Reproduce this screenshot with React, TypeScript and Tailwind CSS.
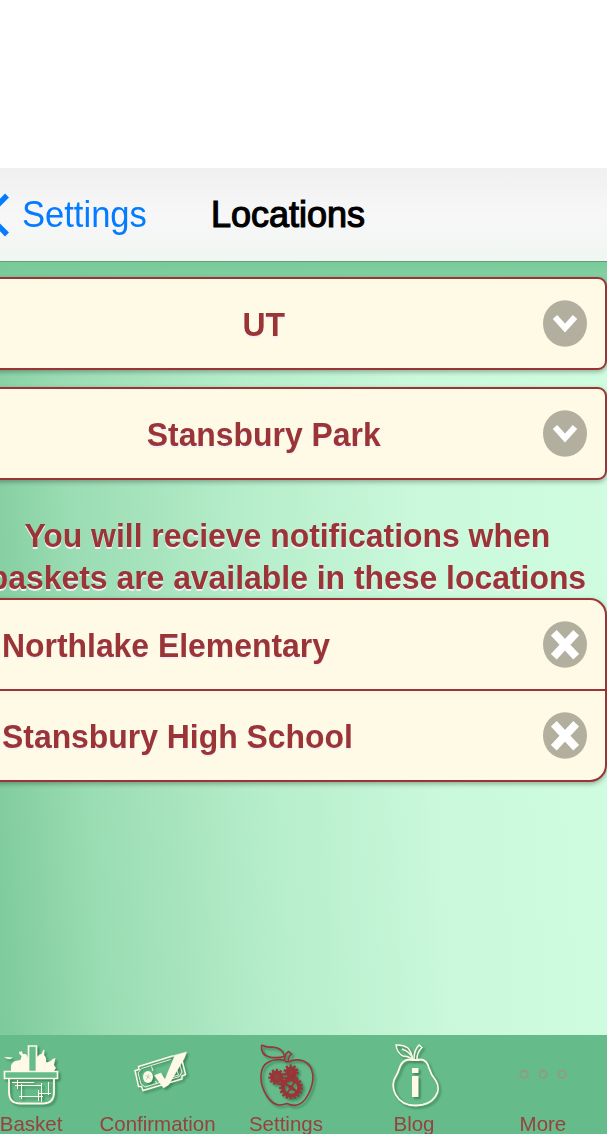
import React from "react";

const cream = "#fffae5";
const maroon = "#9b3437";

function DownBadge() {
  return (
    <svg className="h-[47px] w-11 shrink-0" viewBox="0 0 44 47">
      <ellipse cx="22" cy="23.5" rx="22" ry="23.3" fill="#b3af9e" />
      <path d="M12 17 L22 28 L32 17" fill="none" stroke="#fff" strokeWidth="6" />
    </svg>
  );
}

function RemoveBadge() {
  return (
    <svg className="h-[47px] w-11 shrink-0" viewBox="0 0 44 47">
      <ellipse cx="22" cy="23.5" rx="22" ry="23.3" fill="#b3af9e" />
      <path d="M10.8 11.7 L33.2 35.7 M33.2 11.7 L10.8 35.7" fill="none" stroke="#fff" strokeWidth="8" />
    </svg>
  );
}

function SelectBox({ label }: { label: string }) {
  return (
    <div className="-ml-20 flex h-[93px] items-center rounded-[9px] border-2 border-[#9b3437] bg-[#fffae5] pr-[18px] shadow-[0_2px_5px_rgba(0,0,0,0.3)]">
      <div className="ml-[120px] mr-[58px] flex-1 text-center">
        <span className="inline-block origin-center scale-x-[0.938] whitespace-nowrap text-[34px] leading-10 [text-shadow:0_2px_0_#f0f0f3]">{label}</span>
      </div>
      <DownBadge />
    </div>
  );
}

function LocationRow({ name }: { name: string }) {
  return (
    <div className="flex h-[91px] items-center justify-between pl-[80px] pr-[18px] last:h-[89px]">
      <span className="inline-block origin-left scale-x-[0.938] whitespace-nowrap text-[34px] leading-10 [text-shadow:0_2px_0_#f0f0f3]">{name}</span>
      <RemoveBadge />
    </div>
  );
}

const iconClass = "h-[75px] w-[75px] shrink-0 overflow-visible drop-shadow-[2px_2px_1px_rgba(0,50,25,0.4)]";

function BasketIcon() {
  return (
    <svg className={iconClass} viewBox="-6 1035 75 75" fill="none" stroke={cream}>
      <path
        d="M11 1071 Q10 1063 15 1061 Q18 1060.500 20.500 1060 L21.500 1056 Q18 1053.500 19.500 1051.500 L22 1051.500 L23 1054 Q27 1053 28 1058 L28 1071 Z M37 1071 V1057 Q39 1054 42 1053.500 Q43 1049 44.500 1050 L44 1055 Q47 1058 46 1062 Q50 1063 52.500 1059 L55.500 1058 L54 1065 L56 1068 L54 1071 Z M4 1057 L13 1057.500 Q9 1061 4 1057 Z"
        fill={cream}
        stroke="none"
      />
      <path d="M28.500 1071 V1046 H36.500 V1071" strokeWidth="1.7" fill="#65bb8a" />
      <path d="M4.500 1071.500 H57.500 V1078.500 H4.500 Z" strokeWidth="1.7" fill="#65bb8a" />
      <path d="M9 1079 V1092 Q9 1103.500 20 1103.500 H43 Q54 1103.500 54 1092 V1079" strokeWidth="1.8" />
      <path d="M12 1082.500 H34 M15 1085.500 H41 M17.500 1080 V1089 M21.500 1084 V1099 M19 1096.500 H43 M41.500 1083 V1102 M38.500 1090 V1101 M39 1093.500 H51 M48.500 1082 V1095" strokeWidth="1" />
    </svg>
  );
}

function TicketIcon() {
  return (
    <svg className={iconClass} viewBox="121.500 1035 75 75" fill="none" stroke={cream}>
      <path d="M173 1056 L139 1066.500 L139.500 1069.500 L135.500 1070.500 L139 1086.500 L142 1086.500 L143.500 1090.500 L182.500 1079 L182.500 1076 L186 1074.500 L182.500 1060" strokeWidth="1.5" />
      <path d="M171 1059.500 L142 1068.500 L138.500 1073 L141.500 1084 L145.500 1087 L180 1076.500 L182.500 1072 L179.500 1062 M152 1066.500 L153.500 1071 M156 1081 L157 1083 M176 1066 L179 1075 L168 1078.500" strokeWidth="0.9" />
      <ellipse cx="148.500" cy="1077" rx="5" ry="6" fill={cream} stroke="none" />
      <path d="M146 1075 L151 1079 M149 1074 L147 1080 M151 1075 L148 1078" stroke="#8dcaa3" strokeWidth="0.6" />
      <path d="M155 1075.500 L161.500 1073 L165.500 1079.500 L175 1056.500 L172.500 1056 L187 1052 L185 1058 L169 1085 L164 1088 Z" fill={cream} strokeWidth="0.5" />
    </svg>
  );
}

function Gear({ x, y, r }: { x: number; y: number; r: number }) {
  const spokes = r > 8;
  return (
    <g transform={`translate(${x} ${y})`}>
      <circle r={r} strokeWidth="2.4" strokeDasharray="2.200 1.800" />
      <circle r={r - 2.6} strokeWidth="4" />
      {spokes ? <path d="M-6 -4 L6 4 M-4 6 L4 -6" strokeWidth="2.200" /> : <circle r="1.600" strokeWidth="1.400" />}
      <circle r={spokes ? 2.4 : 0.8} fill={maroon} stroke="none" />
    </g>
  );
}

function AppleIcon() {
  return (
    <svg className={iconClass} viewBox="248.500 1035 75 75" fill="none" stroke={maroon}>
      <path d="M284 1060.500 Q276 1058 268 1062 C258 1067 258 1084 267 1097 C274 1107 281 1105.500 286.500 1103.500 C296 1108 303 1104 308 1094 C315 1080 314 1066 303 1061 Q295 1058.500 289 1061.500 Q286 1062.500 284 1060.500" strokeWidth="1.6" />
      <path d="M284 1061 Q284 1054 288 1051.500 L291 1054 Q287 1058 288 1061.500" strokeWidth="1.5" />
      <path d="M261 1045 Q266 1047.500 272 1047 Q283 1048 284 1056.500 Q276 1058.500 269 1057 Q260 1055 261 1045" strokeWidth="1.6" />
      <Gear x={276} y={1077} r={7} />
      <Gear x={290.500} y={1072} r={6.4} />
      <Gear x={290.500} y={1087.5} r={10.8} />
    </svg>
  );
}

function PearIcon() {
  return (
    <svg className={iconClass} viewBox="377 1035 75 75" fill="none" stroke={cream}>
      <path d="M409 1059.500 Q402 1060 399.500 1068 Q398 1073 395.500 1077 C389 1086 396 1105.500 415 1105.500 C435 1106 442 1090 436 1081 Q431 1075 429 1068 Q427 1060 421 1059.500 Q416 1060.500 409 1059.500" strokeWidth="1.8" />
      <path d="M414 1059 Q414 1050 419 1045 L422 1047.500 Q417 1052 417 1059" strokeWidth="1.5" />
      <path d="M412.500 1059 Q412 1053 408 1048 Q403 1044.500 396 1045 Q397 1053 403 1056 Q408 1056 412.500 1059 M402 1049 Q410 1052 412.500 1058" strokeWidth="1.4" />
      <path d="M412 1068 H418.500 V1073 H412 Z M412 1076 H418.500 V1097 H412 Z" fill={cream} stroke="none" />
    </svg>
  );
}

function MoreIcon() {
  return (
    <svg className="h-[75px] w-[75px] shrink-0" viewBox="505.500 1035 75 75" fill="none" stroke="#92998b" strokeWidth="1.8">
      <circle cx="524.600" cy="1074.300" r="3.700" />
      <circle cx="543.600" cy="1074.300" r="3.700" />
      <circle cx="562.600" cy="1074.300" r="3.700" />
    </svg>
  );
}

function Tab({ label, children }: { label: string; children: React.ReactNode }) {
  return (
    <div className="flex flex-col items-center overflow-visible">
      {children}
      <span className="inline-block scale-x-[0.975] whitespace-nowrap text-[21px] leading-7 text-[#96423f]">{label}</span>
    </div>
  );
}

export default function App() {
  return (
    <div className="flex h-[1134px] w-[607px] flex-col overflow-hidden bg-white pt-[168px] font-['Liberation_Sans',Arial,sans-serif] text-[#9b3437]">
      <header className="flex h-[94px] shrink-0 items-center border-b border-[#659d7c] bg-linear-to-b from-[#f0f0f0] via-[#f7f7f7] to-[#f1f6f2]">
        <svg className="h-11 w-[10px] shrink-0" viewBox="0 0 10 44" fill="none">
          <path d="M7 2.500 L-12 22 L7 41.500" stroke="#047cff" strokeWidth="5.500" />
        </svg>
        <span className="ml-3 inline-block w-[129px] origin-left scale-x-[0.96] whitespace-nowrap text-[36px] leading-10 text-[#047cff]">Settings</span>
        <h1 className="ml-[60px] whitespace-nowrap text-[36px] font-normal leading-10 text-black [-webkit-text-stroke:1.2px_black]">Locations</h1>
      </header>
      <main className="h-[773px] shrink-0 overflow-hidden bg-[linear-gradient(180deg,#78ca99_0px,rgba(120,202,153,0.85)_16px,rgba(120,202,153,0)_110px),linear-gradient(86deg,#7dca9b_0%,#9adcb3_16%,#b5edca_42%,#c9f8da_68%,#d0fde0_100%)] pt-[15px] font-bold">
        <div className="flex flex-col gap-[17px]">
          <SelectBox label="UT" />
          <SelectBox label="Stansbury Park" />
        </div>
        <div className="-mx-10 flex h-[118px] flex-col items-center pt-[34px] pr-[32px] text-[34px] leading-[42px] [text-shadow:0_2px_0_#f0f0f3]">
          <span className="scale-x-[0.938] whitespace-nowrap">You will recieve notifications when</span>
          <span className="scale-x-[0.938] whitespace-nowrap">baskets are available in these locations</span>
        </div>
        <div className="-ml-20 h-[184px] divide-y-2 divide-[#9b3437] rounded-[17px] border-2 border-[#9b3437] bg-[#fffae5] shadow-[0_2px_5px_rgba(0,0,0,0.3)]">
          <LocationRow name="Northlake Elementary" />
          <LocationRow name="Stansbury High School" />
        </div>
      </main>
      <nav className="-ml-8 grid h-[99px] w-[639px] shrink-0 grid-cols-[127px_126px_130px_127px_129px] overflow-hidden bg-[#65bb8a]">
        <Tab label="Basket"><BasketIcon /></Tab>
        <Tab label="Confirmation"><TicketIcon /></Tab>
        <Tab label="Settings"><AppleIcon /></Tab>
        <Tab label="Blog"><PearIcon /></Tab>
        <Tab label="More"><MoreIcon /></Tab>
      </nav>
    </div>
  );
}
